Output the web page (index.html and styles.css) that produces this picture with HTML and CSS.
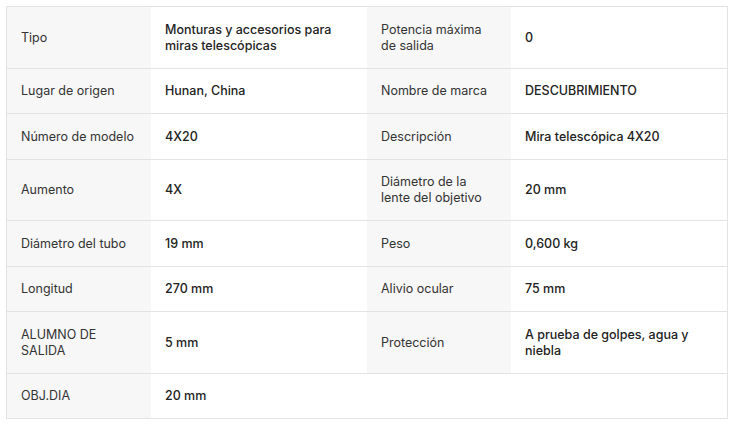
FILE: index.html
```html
<!DOCTYPE html>
<html lang="es">
<head>
<meta charset="utf-8">
<link rel="stylesheet" href="styles.css">
</head>
<body>
<div class="specs">
  <div class="row">
    <div class="cell label">Tipo</div>
    <div class="cell value">Monturas y accesorios para miras telescópicas</div>
    <div class="cell label">Potencia máxima de salida</div>
    <div class="cell value">0</div>
  </div>
  <div class="row">
    <div class="cell label">Lugar de origen</div>
    <div class="cell value">Hunan, China</div>
    <div class="cell label">Nombre de marca</div>
    <div class="cell value">DESCUBRIMIENTO</div>
  </div>
  <div class="row">
    <div class="cell label">Número de modelo</div>
    <div class="cell value">4X20</div>
    <div class="cell label">Descripción</div>
    <div class="cell value">Mira telescópica 4X20</div>
  </div>
  <div class="row">
    <div class="cell label">Aumento</div>
    <div class="cell value">4X</div>
    <div class="cell label">Diámetro de la lente del objetivo</div>
    <div class="cell value">20 mm</div>
  </div>
  <div class="row">
    <div class="cell label">Diámetro del tubo</div>
    <div class="cell value">19 mm</div>
    <div class="cell label">Peso</div>
    <div class="cell value">0,600 kg</div>
  </div>
  <div class="row">
    <div class="cell label">Longitud</div>
    <div class="cell value">270 mm</div>
    <div class="cell label">Alivio ocular</div>
    <div class="cell value">75 mm</div>
  </div>
  <div class="row">
    <div class="cell label">ALUMNO DE SALIDA</div>
    <div class="cell value">5 mm</div>
    <div class="cell label">Protección</div>
    <div class="cell value">A prueba de golpes, agua y niebla</div>
  </div>
  <div class="row last">
    <div class="cell label">OBJ.DIA</div>
    <div class="cell value">20 mm</div>
    <div class="cell empty"></div>
    <div class="cell empty"></div>
  </div>
</div>
</body>
</html>
```
FILE: styles.css
```css
html, body {
  margin: 0;
  padding: 0;
  background: #ffffff;
}
body {
  padding: 6px;
  font-family: Inter, "Noto Sans", "Liberation Sans", sans-serif;
  font-size: 12.5px;
  line-height: 16px;
}
.specs {
  width: 720px;
  border: 1px solid #e3e3e3;
}
.row {
  display: grid;
  grid-template-columns: 144px 216px 144px 216px;
  border-bottom: 1px solid #e3e3e3;
}
.row.last {
  border-bottom: none;
}
.cell {
  display: flex;
  align-items: center;
  padding: 14.75px 14px 13.75px;
}
.label {
  background: #f7f7f7;
  color: #333333;
  font-weight: 400;
}
.value {
  color: #222222;
  font-weight: 500;
  padding-right: 22px;
}
.empty {
  background: #ffffff;
}
```
